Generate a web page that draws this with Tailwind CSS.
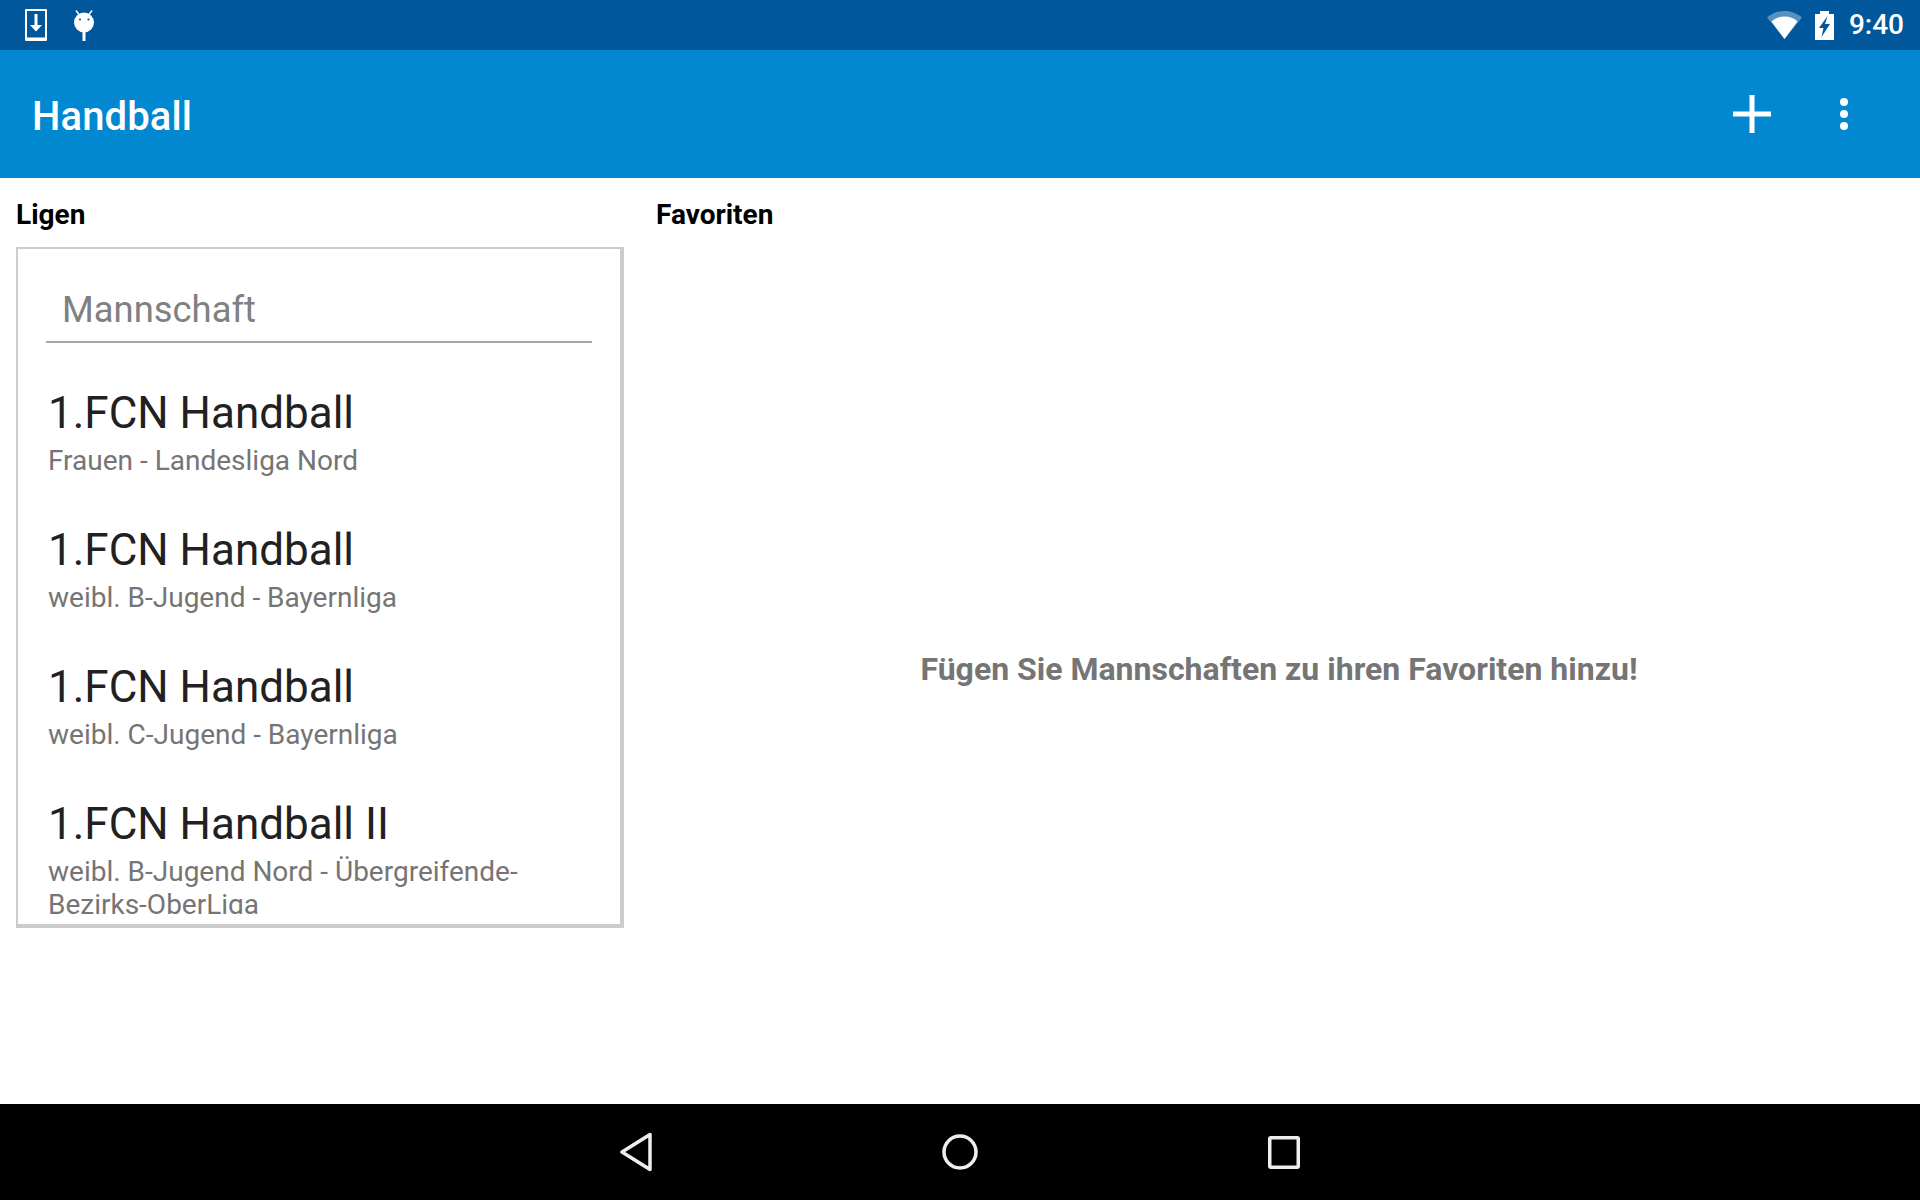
<!DOCTYPE html>
<html lang="de">
<head>
    <meta charset="UTF-8">
    <title>Handball</title>
    <script src="https://cdn.jsdelivr.net/npm/@tailwindcss/browser@4"></script>
</head>
<body class="bg-white font-['Roboto',sans-serif]">
<div class="flex h-[1200px] w-[1920px] flex-col overflow-hidden">

    <!-- Statusleiste -->
    <div class="flex h-[50px] items-center justify-between bg-[#01579B] pl-[25px] pr-[16px]">
        <div class="flex items-center gap-[27px]">
            <svg class="h-[32px] w-[22px]" viewBox="0 0 22 32" fill="none">
                <path fill="#fff" fill-rule="evenodd" d="M1 0h20a1 1 0 0 1 1 1v30a1 1 0 0 1-1 1H1a1 1 0 0 1-1-1V1a1 1 0 0 1 1-1zM2 2v26.500h18V2z"/>
                <path fill="#fff" d="M9.500 5h3v11H17l-6 6.500L5 16h4.500z"/>
            </svg>
            <svg class="h-[31px] w-[20px]" viewBox="0 0 20 31" fill="none">
                <path stroke="#fff" stroke-width="1.500" d="M2 0.500l3 4M18 0.500l-3 4"/>
                <circle cx="10" cy="12.500" r="10" fill="#fff"/>
                <rect x="8.500" y="20" width="3" height="11" fill="#fff"/>
                <circle cx="6" cy="9.500" r="1.100" fill="#01579B"/>
                <circle cx="14.500" cy="9.500" r="1.100" fill="#01579B"/>
            </svg>
        </div>
        <div class="flex items-center">
            <svg class="mr-[13px] h-[28px] w-[35px]" viewBox="0 0 35 28">
                <path fill="#fff" fill-opacity=".35" d="M17.500 0C10.800 0 4.800 2.400 0 6.500L17.500 28 35 6.500C30.200 2.400 24.200 0 17.500 0z"/>
                <path fill="#fff" d="M17.500 5.500C12.300 5.500 8 7.300 4.500 10.500L17.500 28l13-17.500C27 7.300 22.700 5.500 17.500 5.500z"/>
            </svg>
            <svg class="mr-[15px] h-[29px] w-[19px]" viewBox="0 0 19 29">
                <path fill="#fff" d="M5 0h9v3h5v26H0V3h5z"/>
                <path fill="#01579B" d="M12.500 5L4 17h4.500l-2 9L15 13h-5z"/>
            </svg>
            <span class="text-[28px] leading-none font-medium text-white">9:40</span>
        </div>
    </div>

    <!-- Appbar -->
    <div class="flex h-[128px] items-center justify-between bg-[#0288D1] pl-[32px] pr-[72px]">
        <span class="pt-[6px] text-[40px] font-medium tracking-[0.1px] text-white">Handball</span>
        <div class="flex items-center gap-[69px]">
            <svg class="h-[38px] w-[38px]" viewBox="0 0 38 38"><path fill="#fff" d="M16.500 0h5v16.500H38v5H21.500V38h-5V21.500H0v-5h16.500z"/></svg>
            <svg class="h-[32px] w-[8px]" viewBox="0 0 8 32" fill="#fff">
                <circle cx="4" cy="4" r="4"/><circle cx="4" cy="16" r="4"/><circle cx="4" cy="28" r="4"/>
            </svg>
        </div>
    </div>

    <!-- Inhalt -->
    <div class="flex min-h-0 flex-1">
        <div class="w-[656px] shrink-0 pl-[16px] pr-[32px]">
            <h2 class="mt-[20px] h-[49px] text-[28px] leading-[33px] font-bold text-black">Ligen</h2>
            <div class="h-[681px] overflow-hidden border-t-2 border-r-4 border-b-4 border-l-2 border-[#ccc] pb-[10px]">
                <div class="h-full overflow-hidden px-[28px]">
                    <div class="flex h-[94px] items-end border-b-2 border-[#a8a8a8] pb-[10px] pl-[16px] text-[36.400px] leading-[42px] text-[#808080]">Mannschaft</div>
                    <ul class="pl-[2px]">
                        <li class="mt-[44px]">
                            <div class="text-[44px] leading-[52px] text-[#212121]">1.FCN Handball</div>
                            <div class="mt-[5px] text-[28px] leading-[33px] text-[#757575]">Frauen - Landesliga Nord</div>
                        </li>
                        <li class="mt-[47px]">
                            <div class="text-[44px] leading-[52px] text-[#212121]">1.FCN Handball</div>
                            <div class="mt-[5px] text-[28px] leading-[33px] text-[#757575]">weibl. B-Jugend - Bayernliga</div>
                        </li>
                        <li class="mt-[47px]">
                            <div class="text-[44px] leading-[52px] text-[#212121]">1.FCN Handball</div>
                            <div class="mt-[5px] text-[28px] leading-[33px] text-[#757575]">weibl. C-Jugend - Bayernliga</div>
                        </li>
                        <li class="mt-[47px]">
                            <div class="text-[44px] leading-[52px] text-[#212121]">1.FCN Handball II</div>
                            <div class="mt-[5px] w-[500px] text-[28px] leading-[33px] text-[#757575]">weibl. B-Jugend Nord - Übergreifende-Bezirks-OberLiga</div>
                        </li>
                    </ul>
                </div>
            </div>
        </div>
        <div class="flex flex-1 flex-col">
            <h2 class="mt-[20px] text-[28px] leading-[33px] font-bold text-black">Favoriten</h2>
            <div class="mt-[419px] pr-[18px] text-center text-[32px] leading-[38px] font-bold text-[#757575]">Fügen Sie Mannschaften zu ihren Favoriten hinzu!</div>
        </div>
    </div>

    <!-- Navigationsleiste -->
    <div class="flex h-[96px] items-center justify-center gap-[290px] bg-black">
        <svg class="h-[40px] w-[32px]" viewBox="0 0 32 40" fill="none"><path stroke="#eee" stroke-width="3.500" stroke-linejoin="round" d="M30 2.500v35L2 20z"/></svg>
        <svg class="h-[36px] w-[36px]" viewBox="0 0 36 36" fill="none"><circle cx="18" cy="18" r="16" stroke="#eee" stroke-width="3.500"/></svg>
        <svg class="h-[33px] w-[32px]" viewBox="0 0 32 33" fill="none"><rect x="1.750" y="1.750" width="28.500" height="29.500" rx="1" stroke="#eee" stroke-width="3.500"/></svg>
    </div>
</div>
</body>
</html>
